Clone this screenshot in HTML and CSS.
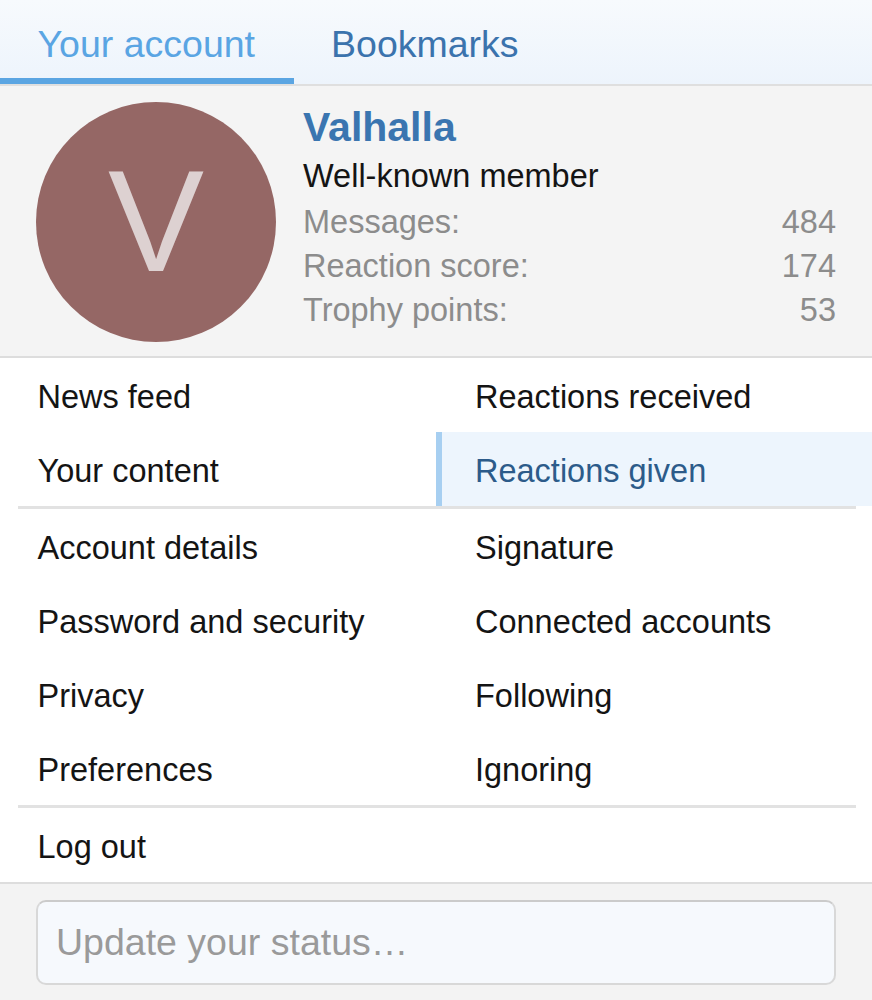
FILE: index.html
```html
<!DOCTYPE html>
<html lang="en">
<head>
<meta charset="utf-8">
<title>Account menu</title>
<link rel="stylesheet" href="styles.css">
</head>
<body>
<div class="menu">
  <div class="tabs">
    <a class="tab tab--active">Your account</a>
    <a class="tab">Bookmarks</a>
  </div>
  <div class="profile">
    <div class="avatar"><span>V</span></div>
    <div class="info">
      <h3 class="name">Valhalla</h3>
      <div class="user-title">Well-known member</div>
      <dl class="pair"><dt>Messages:</dt><dd>484</dd></dl>
      <dl class="pair"><dt>Reaction score:</dt><dd>174</dd></dl>
      <dl class="pair"><dt>Trophy points:</dt><dd>53</dd></dl>
    </div>
  </div>
  <div class="links">
    <ul class="link-grid">
      <li class="link">News feed</li>
      <li class="link link--right">Reactions received</li>
      <li class="link">Your content</li>
      <li class="link link--right link--selected">Reactions given</li>
    </ul>
    <hr class="sep">
    <ul class="link-grid">
      <li class="link">Account details</li>
      <li class="link link--right">Signature</li>
      <li class="link">Password and security</li>
      <li class="link link--right">Connected accounts</li>
      <li class="link">Privacy</li>
      <li class="link link--right">Following</li>
      <li class="link">Preferences</li>
      <li class="link link--right">Ignoring</li>
    </ul>
    <hr class="sep">
    <ul class="link-list">
      <li class="link">Log out</li>
    </ul>
  </div>
  <div class="footer">
    <input class="status" type="text" placeholder="Update your status…">
  </div>
</div>
</body>
</html>
```
FILE: styles.css
```css
* { box-sizing: border-box; }
html, body { margin: 0; padding: 0; }
body {
  font-family: "Liberation Sans", Arial, Helvetica, sans-serif;
  background: #f3f3f3;
  color: #141414;
}
.menu {
  width: 872px;
  min-height: 1000px;
  display: flex;
  flex-direction: column;
  background: #f3f3f3;
}
.tabs {
  display: flex;
  height: 86px;
  background: linear-gradient(to bottom, #f7fafd, #edf4fc);
  border-bottom: 2px solid #dfdfdf;
}
.tab {
  height: 84px;
  padding: 18px 38.5px 0 37.5px;
  font-size: 37.5px;
  line-height: 52px;
  color: #3b73ad;
  white-space: nowrap;
  cursor: pointer;
}
.tab--active {
  color: #5aa5e3;
  border-bottom: 6px solid #5ba5e2;
}
.profile {
  display: flex;
  gap: 27px;
  height: 272px;
  padding: 15px 36px 0;
  background: #f4f4f4;
  border-bottom: 2px solid #dddddd;
}
.avatar {
  flex: none;
  width: 240px;
  height: 240px;
  margin-top: 1px;
  border-radius: 50%;
  background: #956765;
  display: flex;
  justify-content: center;
  align-items: center;
}
.avatar span {
  font-size: 144px;
  line-height: 240px;
  color: #ddd1d1;
}
.info { flex: 1; }
.name {
  margin: 0;
  font-size: 41px;
  line-height: 52px;
  font-weight: bold;
  color: #3a75b0;
}
.user-title {
  font-size: 32.5px;
  line-height: 47px;
  color: #141414;
}
.pair {
  display: flex;
  justify-content: space-between;
  margin: 0;
  font-size: 32.5px;
  line-height: 44px;
  color: #8c8c8c;
}
.pair dt, .pair dd { margin: 0; }
.links { background: #ffffff; }
.link-grid, .link-list {
  list-style: none;
  margin: 0;
  padding: 0;
}
.link-grid {
  display: grid;
  grid-template-columns: 1fr 1fr;
}
.link {
  height: 74px;
  padding-top: 4px;
  padding-left: 37.5px;
  font-size: 32.5px;
  line-height: 70px;
  color: #141414;
  white-space: nowrap;
}
.link--right { padding-left: 39px; }
.link--selected {
  background: #edf5fd;
  border-left: 6px solid #a7cff1;
  padding-left: 33px;
  color: #2c5b8a;
}
.sep {
  margin: 0 16px 0 18px;
  height: 3px;
  border: 0;
  background: #e2e2e2;
}
.footer {
  flex: 1;
  padding: 16px 36px 15px;
  background: #f3f3f3;
  border-top: 2px solid #dddddd;
}
.status {
  display: block;
  width: 100%;
  height: 85px;
  padding: 0 18px;
  border: 2px solid #d8d8d8;
  border-top-color: #cbcbcb;
  border-radius: 10px;
  background: #f6f9fd;
  font-family: "Liberation Sans", Arial, Helvetica, sans-serif;
  font-size: 37.5px;
  color: #141414;
  outline: none;
}
.status::placeholder { color: #9a9a9a; }
```
